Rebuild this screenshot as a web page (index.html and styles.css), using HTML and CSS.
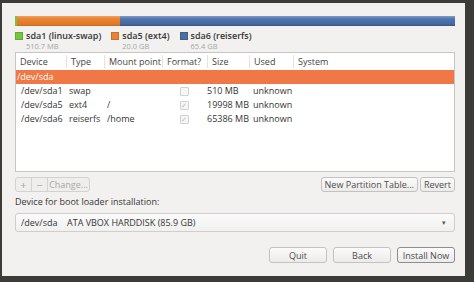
FILE: index.html
```html
<!DOCTYPE html>
<html>
<head>
    <title>Installation type</title>
    <link rel="stylesheet" href="styles.css">
</head>
<body>
    <div class="window">
        <div class="bar">
            <div class="seg swap"></div>
            <div class="seg ext4"></div>
            <div class="seg reiser"></div>
        </div>

        <div class="legend">
            <div class="item">
                <span class="swatch swap"></span>
                <div>
                    <div class="name">sda1 (linux-swap)</div>
                    <div class="size">510.7 MB</div>
                </div>
            </div>
            <div class="item">
                <span class="swatch ext4"></span>
                <div>
                    <div class="name">sda5 (ext4)</div>
                    <div class="size">20.0 GB</div>
                </div>
            </div>
            <div class="item">
                <span class="swatch reiser"></span>
                <div>
                    <div class="name">sda6 (reiserfs)</div>
                    <div class="size">65.4 GB</div>
                </div>
            </div>
        </div>

        <div class="table">
            <div class="row head">
                <div>Device</div>
                <div>Type</div>
                <div>Mount point</div>
                <div>Format?</div>
                <div>Size</div>
                <div>Used</div>
                <div>System</div>
            </div>
            <div class="row disk">/dev/sda</div>
            <div class="row">
                <div class="dev">/dev/sda1</div>
                <div>swap</div>
                <div></div>
                <div class="check"><span class="box"></span></div>
                <div class="sz">510 MB</div>
                <div class="used">unknown</div>
                <div></div>
            </div>
            <div class="row">
                <div class="dev">/dev/sda5</div>
                <div>ext4</div>
                <div>/</div>
                <div class="check"><span class="box">&#10003;</span></div>
                <div class="sz">19998 MB</div>
                <div class="used">unknown</div>
                <div></div>
            </div>
            <div class="row">
                <div class="dev">/dev/sda6</div>
                <div>reiserfs</div>
                <div>/home</div>
                <div class="check"><span class="box">&#10003;</span></div>
                <div class="sz">65386 MB</div>
                <div class="used">unknown</div>
                <div></div>
            </div>
        </div>

        <div class="tools">
            <div class="group">
                <button class="btn small" disabled>+</button>
                <button class="btn small" disabled>&minus;</button>
                <button class="btn change" disabled>Change...</button>
            </div>
            <div class="spacer"></div>
            <button class="btn">New Partition Table...</button>
            <button class="btn">Revert</button>
        </div>

        <div class="label">Device for boot loader installation:</div>
        <div class="combo">
            <span class="combo-dev">/dev/sda</span>
            <span>ATA VBOX HARDDISK (85.9 GB)</span>
            <span class="arrow">&#9662;</span>
        </div>

        <div class="actions">
            <button class="btn wide">Quit</button>
            <button class="btn wide">Back</button>
            <button class="btn wide default">Install Now</button>
        </div>
    </div>
</body>
</html>
```

FILE: styles.css
```css
body {
    margin: 0;
    background: #3c3b37;
    font-family: "Open Sans", "Liberation Sans", sans-serif;
    font-size: 9px;
    color: #353535;
    width: 474px;
    height: 282px;
    overflow: hidden;
}

.window {
    margin: 3px 9px 0 2px;
    height: 273px;
    box-sizing: border-box;
    padding: 13px 10px 0 13px;
    background: #f2f1f0;
}

.bar {
    display: flex;
    height: 10px;
}

.seg.swap {
    width: 2px;
    background: #73c63e;
}

.seg.ext4 {
    width: 103px;
    background: linear-gradient(#f0a060, #e98330 30%, #e07a28 80%, #c86a20);
}

.seg.reiser {
    flex: 1;
    background: linear-gradient(#7f9cc8, #4f74ab 30%, #46699f 80%, #35548a);
}

.legend {
    display: flex;
    gap: 10px;
    margin-top: 4px;
}

.item {
    display: flex;
    gap: 3px;
}

.swatch {
    width: 8px;
    height: 8px;
    box-sizing: border-box;
    margin-top: 2px;
    border: 1px solid rgba(0, 0, 0, 0.15);
}

.swatch.swap { background: #73c63e; }
.swatch.ext4 { background: #e98330; }
.swatch.reiser { background: #4a6fa7; }

.name {
    font-weight: 600;
    font-size: 9px;
    line-height: 12px;
}

.size {
    color: #a5a5a5;
    font-size: 7.5px;
    line-height: 9px;
}

.table {
    margin-top: 1px;
    height: 120px;
    box-sizing: border-box;
    background: #ffffff;
    border: 1px solid #c6c5c3;
}

.row {
    display: grid;
    grid-template-columns: 50px 38px 58px 45px 42px 44px 1fr;
    height: 14px;
    line-height: 14px;
}

.row > div {
    padding-left: 3px;
    white-space: nowrap;
}

.row.head {
    height: 17px;
    color: #444444;
}

.row.head > div {
    margin: 2px 0;
    padding-left: 4px;
    line-height: 13px;
}

.row.head > div + div {
    border-left: 1px solid #e4e3e1;
}

.row.disk {
    display: block;
    padding-left: 1px;
    background: #f07746;
    color: #ffffff;
}

.row .dev {
    padding-left: 5px;
}

.row .sz {
    padding-left: 0;
}

.row .used {
    padding-left: 4px;
}

.check {
    display: flex;
    justify-content: center;
    align-items: center;
}

.box {
    width: 7px;
    height: 7px;
    border: 1px solid #d2d1cf;
    border-radius: 1px;
    background: #f6f6f5;
    color: #b8b8b8;
    font-size: 7px;
    line-height: 7px;
    text-align: center;
    margin-right: 4px;
}

.tools {
    display: flex;
    gap: 2px;
    margin-top: 5px;
    height: 15px;
}

.spacer {
    flex: 1;
}

.group {
    display: flex;
}

.btn {
    font-family: inherit;
    font-size: 9px;
    color: #4c4c4c;
    height: 15px;
    padding: 0 3px;
    border: 1px solid #c3c2c0;
    border-radius: 3px;
    background: linear-gradient(#fbfbfb, #ecebea);
    line-height: 13px;
}

.btn:disabled {
    color: #a9a8a6;
    background: #efeeed;
    border-color: #d3d2d0;
}

.group .btn {
    border-radius: 0;
    margin-right: -1px;
}

.group .btn:first-child {
    border-radius: 3px 0 0 3px;
}

.group .btn:last-child {
    border-radius: 0 3px 3px 0;
}

.btn.small {
    width: 17px;
    padding: 0;
    font-size: 11px;
}

.btn.change {
    width: 43px;
    padding: 0;
}

.label {
    margin-top: 3px;
    line-height: 14px;
}

.combo {
    display: flex;
    align-items: center;
    margin-top: 4px;
    height: 19px;
    box-sizing: border-box;
    padding: 0 8px 0 5px;
    border: 1px solid #cfcecc;
    border-radius: 3px;
    background: linear-gradient(#fbfbfb, #f1f0ef);
}

.combo-dev {
    width: 46px;
}

.arrow {
    margin-left: auto;
    font-size: 7px;
    color: #555;
}

.actions {
    display: flex;
    justify-content: flex-end;
    gap: 6px;
    margin-top: 15px;
}

.btn.wide {
    width: 58px;
    height: 16px;
}

.btn.default {
    border-color: #8e8d8b;
}
```
